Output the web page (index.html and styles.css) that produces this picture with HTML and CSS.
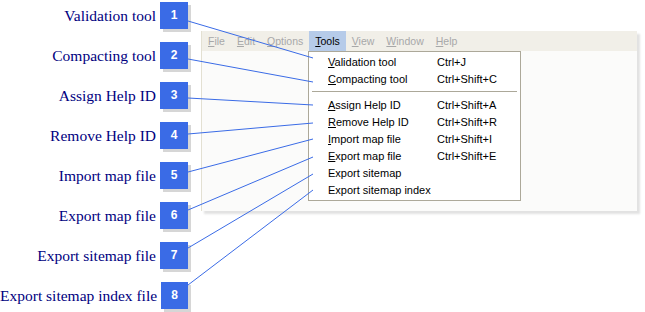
FILE: index.html
```html
<!DOCTYPE html>
<html lang="en">
<head>
    <meta charset="UTF-8">
    <title>Tools menu</title>
    <link rel="stylesheet" href="styles.css">
</head>
<body>
    <div class="figure">
        <ul class="callouts">
            <li class="callout"><span class="label">Validation tool</span><span class="badge">1</span></li>
            <li class="callout"><span class="label">Compacting tool</span><span class="badge">2</span></li>
            <li class="callout"><span class="label">Assign Help ID</span><span class="badge">3</span></li>
            <li class="callout"><span class="label">Remove Help ID</span><span class="badge">4</span></li>
            <li class="callout"><span class="label">Import map file</span><span class="badge">5</span></li>
            <li class="callout"><span class="label">Export map file</span><span class="badge">6</span></li>
            <li class="callout"><span class="label">Export sitemap file</span><span class="badge">7</span></li>
            <li class="callout"><span class="label">Export sitemap index file</span><span class="badge">8</span></li>
        </ul>

        <div class="window">
            <div class="menubar">
                <span class="menubar-item"><u>F</u>ile</span>
                <span class="menubar-item"><u>E</u>dit</span>
                <span class="menubar-item"><u>O</u>ptions</span>
                <span class="menubar-item active"><u>T</u>ools</span>
                <span class="menubar-item"><u>V</u>iew</span>
                <span class="menubar-item"><u>W</u>indow</span>
                <span class="menubar-item"><u>H</u>elp</span>
            </div>

            <div class="menu">
                <div class="menu-item"><span class="menu-text"><u>V</u>alidation tool</span><span class="shortcut">Ctrl+J</span></div>
                <div class="menu-item"><span class="menu-text"><u>C</u>ompacting tool</span><span class="shortcut">Ctrl+Shift+C</span></div>
                <div class="separator"></div>
                <div class="menu-item"><span class="menu-text"><u>A</u>ssign Help ID</span><span class="shortcut">Ctrl+Shift+A</span></div>
                <div class="menu-item"><span class="menu-text"><u>R</u>emove Help ID</span><span class="shortcut">Ctrl+Shift+R</span></div>
                <div class="menu-item"><span class="menu-text"><u>I</u>mport map file</span><span class="shortcut">Ctrl+Shift+I</span></div>
                <div class="menu-item"><span class="menu-text"><u>E</u>xport map file</span><span class="shortcut">Ctrl+Shift+E</span></div>
                <div class="menu-item"><span class="menu-text">Export sitemap</span></div>
                <div class="menu-item"><span class="menu-text">Export sitemap index</span></div>
            </div>
        </div>

        <!-- leader lines from each badge to its menu entry -->
        <svg class="leaders" width="645" height="312" viewBox="0 0 645 312">
            <g stroke="#3a6be6" stroke-width="1" fill="none">
                <line x1="188" y1="21" x2="313" y2="58"/>
                <line x1="188" y1="59" x2="313" y2="82"/>
                <line x1="188" y1="98" x2="313" y2="105"/>
                <line x1="188" y1="134" x2="313" y2="123"/>
                <line x1="188" y1="172" x2="313" y2="139"/>
                <line x1="188" y1="210" x2="313" y2="157"/>
                <line x1="188" y1="248" x2="313" y2="174"/>
                <line x1="188" y1="285" x2="313" y2="190"/>
            </g>
        </svg>
    </div>
</body>
</html>
```

FILE: styles.css
```css
body {
    margin: 0;
    padding: 0;
    background-color: #fff;
}

.figure {
    position: relative;
    display: flex;
    align-items: flex-start;
    width: 645px;
    height: 312px;
}

.callouts {
    list-style: none;
    margin: 0;
    padding: 2px 0 0 0;
    width: 188px;
}

.callout {
    display: flex;
    justify-content: flex-end;
    align-items: flex-start;
    height: 40px;
}

.label {
    font-family: "Liberation Serif", serif;
    font-size: 15.5px;
    line-height: 27px;
    color: #000080;
    white-space: nowrap;
    margin-right: 4px;
}

.badge {
    width: 28px;
    height: 27px;
    line-height: 27px;
    text-align: center;
    background-color: #3a6be6;
    color: #fff;
    font-family: "Liberation Sans", Arial, sans-serif;
    font-weight: bold;
    font-size: 12px;
    box-shadow: 3px 3px 0 #d6d6d6;
}

.window {
    position: relative;
    box-sizing: border-box;
    width: 436px;
    height: 180px;
    margin: 31px 0 0 13px;
    background-color: #fbfbfa;
    border-left: 1px solid #e3e0d2;
    box-shadow: 3px 3px 2px #e2e2e2;
    font-family: "Liberation Sans", Arial, sans-serif;
    font-size: 11px;
}

.menubar {
    display: flex;
    height: 20px;
    background-color: #f1efe8;
    font-size: 10.5px;
}

.menubar-item {
    padding: 0 6px;
    line-height: 20px;
    color: #a8a8a8;
}

.menubar-item.active {
    background-color: #b6cbe9;
    color: #000;
}

.menu {
    position: absolute;
    left: 106px;
    top: 20px;
    box-sizing: border-box;
    width: 213px;
    height: 150px;
    padding: 2px 0;
    background-color: #fff;
    border: 1px solid #aca899;
}

.menu-item {
    display: flex;
    height: 17px;
    line-height: 17px;
    color: #000;
}

.menu-text {
    width: 109px;
    padding-left: 19px;
    white-space: nowrap;
}

.separator {
    height: 1px;
    margin: 3px 3px 5px 3px;
    background-color: #aca899;
}

.leaders {
    position: absolute;
    left: 0;
    top: 0;
    pointer-events: none;
}
```
